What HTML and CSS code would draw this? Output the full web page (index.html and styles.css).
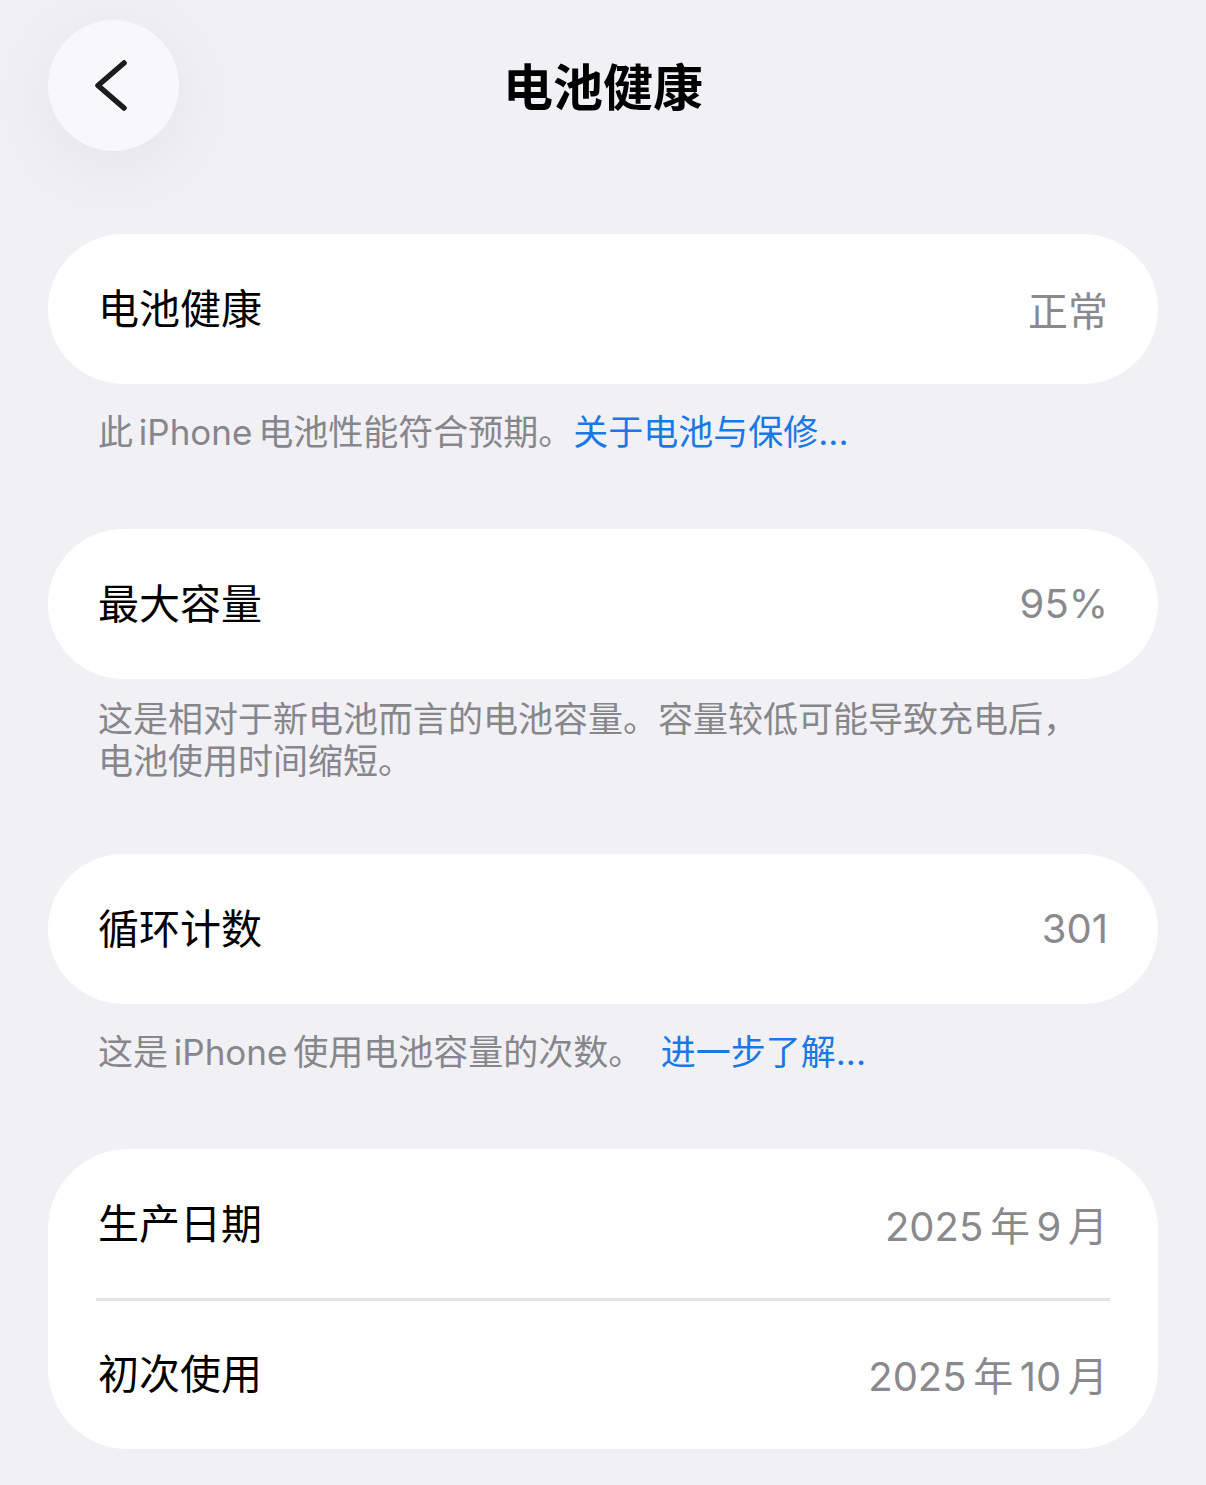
FILE: index.html
```html
<!DOCTYPE html>
<html lang="zh-CN">
<head>
    <meta charset="UTF-8">
    <meta name="viewport" content="width=device-width, initial-scale=1.0">
    <link rel="stylesheet" href="styles.css">
    <title>电池健康</title>
</head>
<body>
    <header class="nav-bar">
        <button class="back-btn" aria-label="返回">
            <svg width="131" height="131" viewBox="0 0 131 131">
                <path d="M76 43 L50 65.5 L76 88" fill="none" stroke="#1c1c1e" stroke-width="5.5" stroke-linecap="round" stroke-linejoin="round"/>
            </svg>
        </button>
        <h1 class="nav-title">电池健康</h1>
        <div></div>
    </header>

    <main class="content">
        <section class="group">
            <div class="card">
                <div class="row">
                    <span class="row-label">电池健康</span>
                    <span class="row-value">正常</span>
                </div>
            </div>
            <p class="footnote">此&#8198;iPhone&#8198;电池性能符合预期。<a href="#" class="link">关于电池与保修...</a></p>
        </section>

        <section class="group group-tight">
            <div class="card">
                <div class="row">
                    <span class="row-label">最大容量</span>
                    <span class="row-value">95%</span>
                </div>
            </div>
            <p class="footnote footnote-multi">这是相对于新电池而言的电池容量。容量较低可能导致充电后，电池使用时间缩短。</p>
        </section>

        <section class="group">
            <div class="card">
                <div class="row">
                    <span class="row-label">循环计数</span>
                    <span class="row-value">301</span>
                </div>
            </div>
            <p class="footnote">这是&#8198;iPhone&#8198;使用电池容量的次数。&ensp;<a href="#" class="link">进一步了解...</a></p>
        </section>

        <section class="group">
            <div class="card">
                <div class="row">
                    <span class="row-label">生产日期</span>
                    <span class="row-value">2025&#8198;年&#8198;9&#8198;月</span>
                </div>
                <div class="row">
                    <span class="row-label">初次使用</span>
                    <span class="row-value">2025&#8198;年&#8198;10&#8198;月</span>
                </div>
            </div>
        </section>
    </main>
</body>
</html>
```

FILE: styles.css
```css
body {
    margin: 0;
    background-color: #f0f0f5;
    font-family: Inter, "Noto Sans CJK SC", sans-serif;
    color: #000;
}

.nav-bar {
    display: grid;
    grid-template-columns: 131px 1fr 131px;
    align-items: center;
    padding: 20px 48px 0;
}

.back-btn {
    width: 131px;
    height: 131px;
    padding: 0;
    border: none;
    border-radius: 50%;
    background-color: #f8f8fb;
    box-shadow: 0 14px 80px rgba(0, 0, 0, 0.06);
    display: flex;
    cursor: pointer;
}

.nav-title {
    margin: 0;
    text-align: center;
    font-size: 50px;
    font-weight: 700;
    line-height: 1;
    padding-top: 4px;
}

.content {
    padding: 83px 48px 0;
}

.group {
    margin-bottom: 76px;
}

.group-tight {
    margin-bottom: 72px;
}

.card {
    background-color: #fff;
    border-radius: 80px;
    overflow: hidden;
}

.row {
    box-sizing: border-box;
    height: 150px;
    display: flex;
    justify-content: space-between;
    align-items: center;
    padding: 0 50px 6px 50px;
    font-size: 41px;
    position: relative;
}

.row + .row::before {
    content: "";
    position: absolute;
    top: -1px;
    left: 48px;
    right: 48px;
    height: 3px;
    background-color: #e4e4e8;
}

.row-label {
    font-weight: 400;
}

.row-value {
    color: #8a8a8e;
    font-size: 40px;
    padding-top: 5px;
}

.footnote {
    margin: 27px 50px 0;
    font-size: 35px;
    line-height: 42px;
    color: #86868b;
}

.footnote-multi {
    margin-top: 19px;
}

.link {
    color: #1a78e6;
    text-decoration: none;
}
```
